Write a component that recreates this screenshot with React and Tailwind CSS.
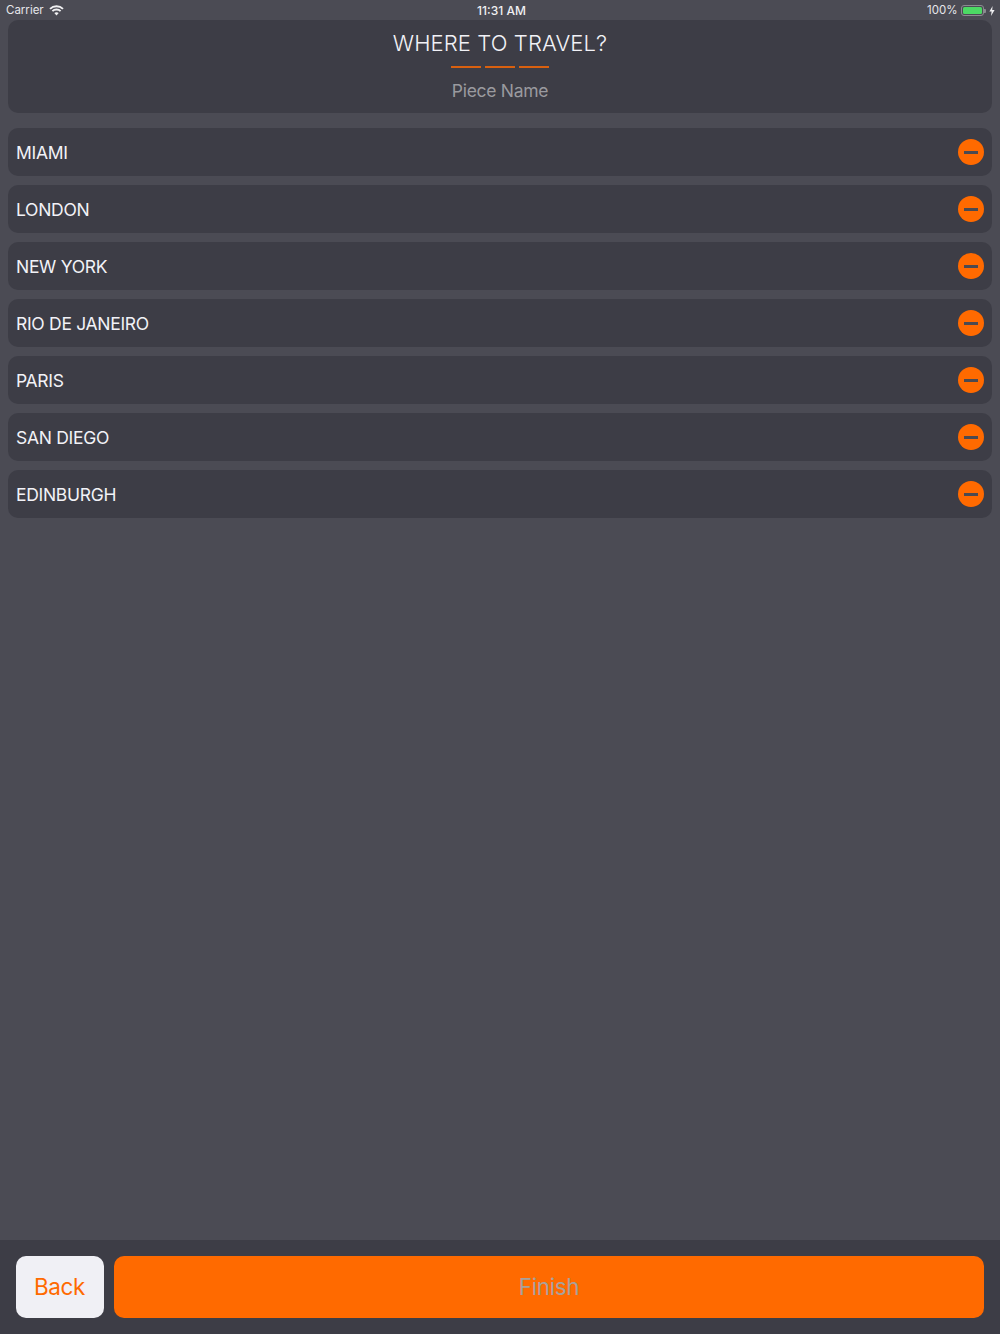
const font = { fontFamily: '"Inter", "Liberation Sans", sans-serif' };

const cities = ["MIAMI", "LONDON", "NEW YORK", "RIO DE JANEIRO", "PARIS", "SAN DIEGO", "EDINBURGH"];

function Wifi() {
  return (
    <svg width="15" height="11" viewBox="0 0 15 11" className="ml-[5px] -mt-[1px]">
      <path d="M1 3.9C2.7 2.2 5 1.2 7.5 1.2s4.8 1 6.5 2.7" fill="none" stroke="#f0f0f2" strokeWidth="1.9" />
      <path d="M3.4 6.2c1-1.1 2.5-1.7 4.1-1.7s3.1.6 4.1 1.7" fill="none" stroke="#f0f0f2" strokeWidth="1.8" />
      <path d="M5.3 8.1c.6-.6 1.4-.9 2.2-.9s1.6.3 2.2.9L7.5 10.4z" fill="#f0f0f2" />
    </svg>
  );
}

function Battery() {
  return (
    <div className="flex items-center ml-[4px]">
      <div className="w-[23px] h-[11px] rounded-[3px] border border-[#8b8b90] p-[1px]">
        <div className="w-full h-full rounded-[1.5px] bg-[#4cd964]" />
      </div>
      <div className="w-[1.5px] h-[4px] bg-[#8b8b90] rounded-r-[1px]" />
    </div>
  );
}

function Bolt() {
  return (
    <svg width="6" height="10" viewBox="0 0 6 10" className="ml-[3px]">
      <path d="M3.6 0 0.4 5.6h2.2L2 10l3.6-6H3.2z" fill="#f0f0f2" />
    </svg>
  );
}

function Row({ label }) {
  return (
    <div className="h-[48px] rounded-[10px] bg-[#3d3d46] flex items-center justify-between pl-[8px] pr-[8px]">
      <span className="pt-[2px] text-[17.5px] text-[#f2f2f7] tracking-[-0.3px]">{label}</span>
      <div className="w-[26px] h-[26px] rounded-full bg-[#ff6a00] flex items-center justify-center">
        <div className="w-[14px] h-[3px] bg-[#4a4a52]" />
      </div>
    </div>
  );
}

export default function App() {
  return (
    <div style={font} className="w-[1000px] h-[1334px] bg-[#4b4b54] flex flex-col overflow-hidden">
      <div className="h-[20px] shrink-0 grid grid-cols-3 items-center pl-[6px] pr-[5px] pt-[1px] text-[11.5px] text-[#e6e6ea]">
        <div className="flex items-center">
          <span>Carrier</span>
          <Wifi />
        </div>
        <div className="text-center text-[12px] font-medium text-[#f0f0f2] ml-[2px]">11:31 AM</div>
        <div className="flex items-center justify-end">
          <span>100%</span>
          <Battery />
          <Bolt />
        </div>
      </div>

      <div className="mx-[8px] h-[93px] shrink-0 rounded-[10px] bg-[#3d3d46] flex flex-col items-center">
        <div className="text-[22px] leading-[28px] mt-[9px] font-light text-[#f2f2f7] tracking-[0.1px]">WHERE TO TRAVEL?</div>
        <div className="flex gap-[4px] mt-[9px]">
          <div className="w-[30px] h-[2px] bg-[#d9600f]" />
          <div className="w-[30px] h-[2px] bg-[#d9600f]" />
          <div className="w-[30px] h-[2px] bg-[#d9600f]" />
        </div>
        <div className="text-[17.5px] leading-[24px] mt-[11px] text-[#9a9a9f] tracking-[-0.3px]">Piece Name</div>
      </div>

      <div className="mx-[8px] mt-[15px] flex flex-col gap-[9px] flex-1">
        {cities.map((c) => (
          <Row key={c} label={c} />
        ))}
      </div>

      <div className="h-[94px] shrink-0 bg-[#3d3d46] flex gap-[10px] pl-[16px] pr-[16px] pt-[16px] pb-[16px]">
        <div className="w-[88px] h-[62px] rounded-[10px] bg-[#f0f0f5] flex items-center justify-center pr-[1px] text-[22.5px] text-[#ff6a00] tracking-[-0.4px]">Back</div>
        <div className="flex-1 h-[62px] rounded-[10px] bg-[#ff6a00] flex items-center justify-center text-[22.5px] text-[#a8a19c] tracking-[-0.4px]">Finish</div>
      </div>
    </div>
  );
}
